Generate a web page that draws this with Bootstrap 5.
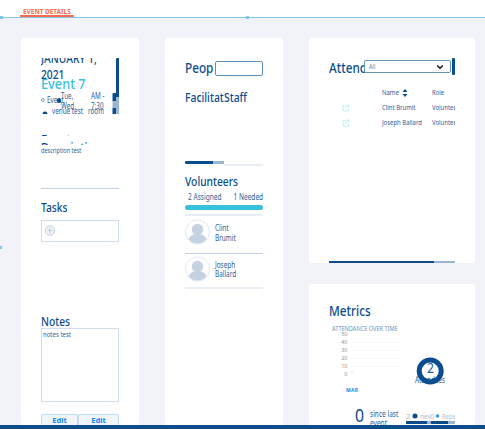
<!DOCTYPE html>
<html lang="en">
<head>
<meta charset="utf-8">
<meta name="viewport" content="width=device-width, initial-scale=1">
<title>Event details</title>
<link href="https://cdn.jsdelivr.net/npm/bootstrap@5.3.0/dist/css/bootstrap.min.css" rel="stylesheet">
<style>
:root{--navy:#0b4d8c;--ink:#2f6299;--soft:#5886b0;--teal:#38c1dc;--line:#cfdeea;--pale:#e8eef5}
body{width:485px;height:429px;overflow:hidden;background:#f1f3f8;font-family:"Noto Sans","Open Sans",sans-serif;color:var(--ink);font-size:8px;line-height:10px}
.topbar{height:18px;border-bottom:1px solid #83c5e8;padding-left:20px;background:#fff}
.tab-on{width:54px;height:17px;border-bottom:2px solid #fb6b4b;color:#fb6b4b;font-size:7px;font-weight:700;line-height:8px;padding:8px 0 0 3px}
.tab-on .t{transform:scaleX(.92)}
.grip{width:3px;height:3px;background:#83c5e8}
.grip-a{left:0;top:16px}.grip-b{left:246px;top:16px}.grip-c{left:-1px;top:246px}
.board{padding:20px 10px 0 21px;height:407px;gap:26px}
.panel{background:#fff;border-radius:2px;padding:20px 20px 0;overflow:hidden}
.w-a{width:118px;flex:none}.w-b{width:166px;flex:none}
.t{display:block;width:max-content;white-space:nowrap;transform-origin:0 50%;transform:scaleX(.79)}
.ttl{font-size:13px;line-height:16px;color:var(--navy);font-weight:500;transform:scaleX(.79)}
.footline{height:4px;background:var(--navy)}
.eventbox{height:56px}
.eventbox .t,.chartbox .t{position:absolute}
.date1{top:-8px;left:0}.date2{top:8px;left:0}
.name7{top:16px;left:0;font-size:15px;line-height:18px;color:var(--teal);font-weight:500;transform:scaleX(.85)}
.e-ev{top:37px;left:6px}.e-tue{top:33px;left:20px}.e-wed{top:43px;left:20px}.e-am{top:33px;left:50px}.e-730{top:43px;left:50px}.e-ven{top:48px;left:11px}.e-room{top:48px;left:47px}
.eventbox svg,.chartbox svg{position:absolute;left:0;top:0}
.desc{height:55px;margin-top:20px;border-bottom:1px solid #bdd2e4}
.strip-a{height:2px;overflow:hidden}.strip-b{height:3px;margin-top:6px;overflow:hidden}
.strip-a .t{margin-top:-3px;transform:scaleX(.86)}.strip-b .t{margin-top:-3px;transform:scaleX(.84)}
.txt-desc{font-size:7px;line-height:10px;margin-top:1px;transform:scaleX(.79)}
.tasks{margin-top:10px}
.taskbox{height:22px;margin-top:5px;border:1px solid var(--line);padding:3px}
.notes{margin-top:71px}
.notebox{height:74px;margin-top:-1px;border:1px solid var(--line);padding:1px 2px 0 1px}
.txt-note{font-size:7px;transform:scaleX(.86)}
.btnrow{margin-top:12px}
.btn-ed{width:37px;height:14px;border:1px solid #c0dcf2;background:#f1f4f8;border-radius:1px;color:#1787ef;font-size:7.6px;font-weight:700;line-height:11px;padding:0 0 2px}
.btn-ed+.btn-ed{width:41px}
.people{height:20px}
.people .ttl{font-size:14px;width:30px;transform:scaleX(.84)}
.inp{width:48px;height:15px;border:1px solid #5c8fbc;border-radius:2px;background:#fff}
.roles{margin-top:12px;height:63px}
.roles .ttl{font-size:12.5px;transform:scaleX(.83)}
.r-fac{width:39px;overflow:visible}
.hbar{height:4px}.hbar i{display:block;height:3px}
.hb1{width:28px;background:var(--navy);border-radius:1px 0 0 1px}.hb2{width:11px;background:#9bb6d2}.hb3{flex:1;border-bottom:2px solid var(--pale);height:5px!important}
.vol{margin-top:8px}
.counts{margin:3px 0 2px;height:10px;padding-left:3px}
.counts .t{transform:scaleX(.82)}
.counts .t+.t{transform-origin:100% 50%;margin-left:-6px}
.tealbar{height:5px;border-radius:3px;background:var(--teal);margin-top:3px}
.person{height:36.5px;padding-top:3px;gap:5px}
.plist{margin-top:4px;border-top:2px solid var(--pale);border-bottom:2px solid var(--pale);height:75px}
.person+.person{border-top:1px solid #bdd0e1;padding-top:2px}
.person .t{transform:scaleX(.8);line-height:9.5px}
.pname{padding-top:4px}
.att{height:225px}.met{height:141px;margin-top:21px}
.atthead{height:19px}
.atthead .ttl{font-size:14px;width:35px;transform:scaleX(.84);line-height:20px}
.sel{width:87px;height:13px;border:1px solid #6593bd;border-radius:2px;background:#fff;padding:1px 6px 0 4px;margin-top:2px;position:relative}
.sel .t{font-size:7px;line-height:9px;color:var(--soft)}
.vthumb{width:3px;height:17px;border-radius:1px;background:var(--navy);margin-left:1px}
.grid-t{display:grid;grid-template-columns:13px 40px 50px 23px;grid-auto-rows:15px;margin-top:8px;overflow:hidden;align-items:center;font-size:7px}
.grid-t .t{transform:scaleX(.85)}
.clip-r{overflow:hidden}
.scrollx{height:2px;margin-top:131px}
.sx1{width:105px;background:var(--navy)}.sx2{width:21px;background:#98b6d3}
.met .ttl{font-size:14px;transform:scaleX(.84)}
.met{padding-top:19px}
.chartbox{height:125px;margin-right:-10px;margin-top:-1px}
.c-cap{left:3px;top:7px;font-size:6.5px;line-height:8px;color:#7294b7;transform:scaleX(.86)!important}
.chartbox text{font-family:"Noto Sans",sans-serif}
.c-zero{left:26px;top:83px;font-size:18px;line-height:28px;color:var(--navy);transform:scaleX(.88)}
.c-since{left:41px;top:90.5px;transform:scaleX(.82)}.c-event{left:41px;top:100px;transform:scaleX(.82)}
</style>
<script src="https://cdn.jsdelivr.net/npm/bootstrap@5.3.0/dist/js/bootstrap.bundle.min.js"></script>
</head>
<body>
<header class="topbar"><div class="tab-on"><span class="t tabname">EVENT DETAILS</span></div></header>
<i class="grip grip-a position-absolute"></i><i class="grip grip-b position-absolute"></i><i class="grip grip-c position-absolute"></i>
<main class="board d-flex">
 <section class="panel w-a">
  <div class="eventbox position-relative overflow-hidden">
   <span class="t ttl date1">JANUARY 1,</span><span class="t ttl date2">2021</span><span class="t name7">Event 7</span>
   <span class="t e-ev">Event</span><span class="t e-tue">Tue,</span><span class="t e-wed">Wed.</span><span class="t e-am">AM -</span><span class="t e-730">7:30</span><span class="t e-ven">venue test</span><span class="t e-room">room</span>
   <svg width="78" height="56"><circle cx="1.8" cy="42" r="1.4" fill="none" stroke="#5c88b2" stroke-width=".8"/><circle cx="18" cy="42.700" r="2.2" fill="#0b4d8c"/><path d="M1.500 56a2.500 2.500 0 0 1 5 0" fill="#0b4d8c"/><path d="M74.500 36h3.500v20h-3.500z" fill="#9bb6d2"/><path d="M75 1q0-1 1-1h2q1 0 1 1v38h-4z" fill="#0b4d8c"/><path d="M71.500 36q0-1 1-1H75v8h-3.500zM71.500 50H75v6h-3.500z" fill="#0b4d8c"/><path d="M71.500 43H75v7h-3.500z" fill="#9bb6d2"/></svg>
  </div>
  <div class="desc"><div class="strip-a"><span class="t ttl">Event</span></div><div class="strip-b"><span class="t ttl">Description</span></div><span class="t txt-desc">description test</span></div>
  <div class="tasks"><span class="t ttl">Tasks</span><div class="taskbox"><svg class="d-block" width="12" height="14" viewBox="0 0 12 14"><circle cx="5" cy="6.500" r="4.700" fill="#eff2f6" stroke="#b5c6d5" stroke-width=".8"/><path d="M2.500 6.500h5M5 4v5" stroke="#b5c6d5" stroke-width=".8"/></svg></div></div>
  <div class="notes"><span class="t ttl">Notes</span><div class="notebox"><span class="t txt-note">notes test</span></div></div>
  <div class="btnrow d-flex"><button class="btn btn-ed">Edit</button><button class="btn btn-ed">Edit</button></div>
 </section>
 <section class="panel w-a">
  <div class="people d-flex align-items-center"><span class="t ttl">Peop</span><div class="inp"></div></div>
  <div class="roles d-flex align-items-start"><span class="t ttl r-fac">Facilitat</span><span class="t ttl">Staff</span></div>
  <div class="hbar d-flex mt-2"><i class="hb1"></i><i class="hb2"></i><i class="hb3"></i></div>
  <div class="vol"><span class="t ttl">Volunteers</span></div>
  <div class="counts d-flex justify-content-between"><span class="t">2 Assigned</span><span class="t">1 Needed</span></div>
  <div class="tealbar"></div>
  <div class="plist">
   <div class="person d-flex"><svg width="25" height="27" viewBox="0 0 25 27"><circle cx="12.500" cy="13" r="12.100" fill="#fff" stroke="#dce6ef" stroke-width=".9"/><circle cx="12.500" cy="10.500" r="5.700" fill="#c4d2e1"/><path d="M3.500 20c2-4 5-5 9-5s7 1 9 5c-4 6-14 6-18 0z" fill="#c4d2e1"/></svg><div class="pname"><span class="t">Clint</span><span class="t">Brumit</span></div></div>
   <div class="person d-flex"><svg width="25" height="27" viewBox="0 0 25 27"><circle cx="12.500" cy="13" r="12.100" fill="#fff" stroke="#dce6ef" stroke-width=".9"/><circle cx="12.500" cy="10.500" r="5.700" fill="#c4d2e1"/><path d="M3.500 20c2-4 5-5 9-5s7 1 9 5c-4 6-14 6-18 0z" fill="#c4d2e1"/></svg><div class="pname"><span class="t">Joseph</span><span class="t">Ballard</span></div></div>
  </div>
 </section>
 <div class="w-b">
  <section class="panel att">
   <div class="atthead d-flex align-items-start"><span class="t ttl">Attenc</span><div class="sel d-flex justify-content-between"><span class="t">All</span><svg width="8" height="9" viewBox="0 0 8 9"><path d="M1.200 3.500L4 6.300l2.800-2.800" fill="none" stroke="#111" stroke-width="1.400"/></svg></div><i class="vthumb"></i></div>
   <div class="grid-t">
    <span></span><span></span><span class="d-flex"><span class="t">Name</span><svg width="6" height="10" viewBox="0 0 6 10"><path d="M.5 4L3 1l2.500 3zM.5 6L3 9l2.500-3z" fill="#0b4d8c"/></svg></span><span class="t">Role</span>
    <span></span><svg width="8" height="8" viewBox="0 0 8 8" fill="none" stroke="#b9ede6" stroke-width=".9"><path d="M3.500 1.500H1v5.500h5.500V4.500M3 5l3.500-3.700M4.500 1h2.300v2.200"/></svg><span class="t">Clint Brumit</span><span class="clip-r"><span class="t">Volunteer</span></span>
    <span></span><svg width="8" height="8" viewBox="0 0 8 8" fill="none" stroke="#b9ede6" stroke-width=".9"><path d="M3.500 1.500H1v5.500h5.500V4.500M3 5l3.500-3.700M4.500 1h2.300v2.200"/></svg><span class="t">Joseph Ballard</span><span class="clip-r"><span class="t">Volunteer</span></span>
   </div>
   <div class="scrollx d-flex"><i class="sx1"></i><i class="sx2"></i></div>
  </section>
  <section class="panel met">
   <span class="t ttl">Metrics</span>
   <div class="chartbox position-relative">
    <span class="t c-cap">ATTENDANCE OVER TIME</span>
    <svg width="136" height="110"><g font-size="5.500" fill="#8e979f" text-anchor="end"><text x="18.500" y="18">50</text><text x="18.500" y="26">40</text><text x="18.500" y="34">30</text><text x="18.500" y="42">20</text><text x="18.500" y="50">10</text><text x="18.500" y="58">0</text></g><path d="M23 24.500h48M23 32.500h48M23 40.500h48M23 48.500h48" stroke="#f6f7f8"/><text x="17" y="73.500" font-size="5" font-weight="700" fill="#1787ef" textLength="12">MAR</text><path d="M22.500 54h1" stroke="#83c5e8"/>
    <text x="86" y="65" font-size="8" fill="#245b96" textLength="30" lengthAdjust="spacingAndGlyphs">Attendees</text><circle cx="101.200" cy="53" r="11" fill="none" stroke="#0b4d8c" stroke-width="5"/><text x="98" y="55" font-size="14" fill="#245b96" textLength="7" lengthAdjust="spacingAndGlyphs">2</text></svg>
    <span class="t c-zero">0</span><span class="t c-since">since last</span><span class="t c-event">event</span>
    <svg width="126" height="110"><g font-size="7.500" fill="#a9bfd7"><text x="77" y="101">2</text><text x="91" y="101" textLength="11" lengthAdjust="spacingAndGlyphs">nev</text><text x="101" y="101">0</text><text x="113" y="101" textLength="14" lengthAdjust="spacingAndGlyphs">Repe</text></g><circle cx="86" cy="98" r="2.500" fill="#0b4d8c"/><circle cx="108.500" cy="98" r="1.800" fill="#3397ee"/><path d="M77 104.500h49" stroke="#9bb6d2" stroke-width="3"/><path d="M77 104.500h21M102 104.500h17" stroke="#0b4d8c" stroke-width="3"/></svg>
   </div>
  </section>
 </div>
</main>
<footer class="footline"></footer>
</body>
</html>
